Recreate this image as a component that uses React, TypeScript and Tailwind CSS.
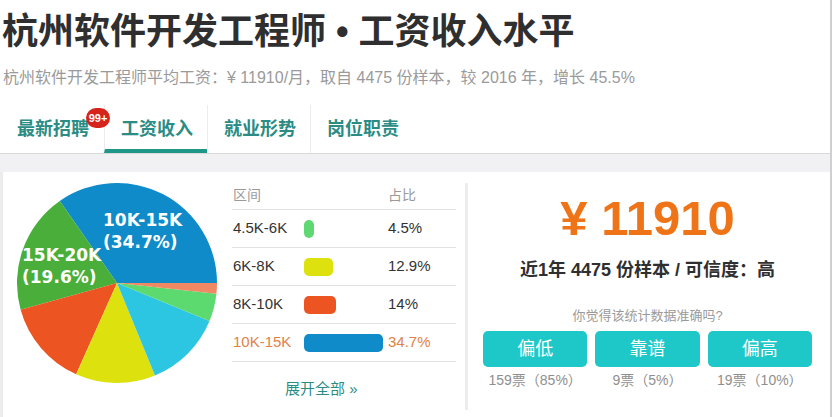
import React from "react";

const slices = [
  { pct: 34.7, color: "#0f8bc9" },
  { pct: 19.6, color: "#4aae3a" },
  { pct: 14, color: "#ec5521" },
  { pct: 12.9, color: "#dde20f" },
  { pct: 12.6, color: "#2cc6e2" },
  { pct: 4.5, color: "#5cda70" },
  { pct: 1.7, color: "#f08864" },
];

const rows = [
  { range: "4.5K-6K", pct: "4.5%", w: 10, color: "#5fd873" },
  { range: "6K-8K", pct: "12.9%", w: 29, color: "#dde20f" },
  { range: "8K-10K", pct: "14%", w: 32, color: "#ec5521" },
  { range: "10K-15K", pct: "34.7%", w: 79, color: "#0f8bc9", hot: true },
];

const votes = [
  { label: "偏低", text: "159票（85%）" },
  { label: "靠谱", text: "9票（5%）" },
  { label: "偏高", text: "19票（10%）" },
];

function Pie() {
  const cx = 100;
  const cy = 100;
  const r = 100;
  let start = 0;
  const pt = (deg: number) => {
    const a = (deg * Math.PI) / 180;
    return [cx + r * Math.cos(a), cy - r * Math.sin(a)];
  };
  return (
    <svg width="201" height="201" viewBox="0 0 201 201">
      {slices.map((s, i) => {
        const end = start + (s.pct / 100) * 360;
        const [x1, y1] = pt(start);
        const [x2, y2] = pt(end);
        const large = end - start > 180 ? 1 : 0;
        start = end;
        return (
          <path
            key={i}
            d={`M${cx} ${cy} L${x1} ${y1} A${r} ${r} 0 ${large} 0 ${x2} ${y2} Z`}
            fill={s.color}
          />
        );
      })}
      <g fill="#fff" fontWeight="bold" fontSize="17" fontFamily="'DejaVu Sans', sans-serif">
        <text x="86" y="43">10K-15K</text>
        <text x="86" y="65">(34.7%)</text>
        <text x="5" y="78">15K-20K</text>
        <text x="5" y="100">(19.6%)</text>
      </g>
    </svg>
  );
}

export default function App() {
  return (
    <div
      className="w-[832px] h-[417px] overflow-hidden bg-white border-r-2 border-[#cfcfcf]"
      style={{ fontFamily: "'Liberation Sans', 'Noto Sans CJK SC', sans-serif" }}
    >
      {/* header */}
      <div className="border-b border-[#d9d9d9]">
        <h1 className="mt-[12px] pl-[2px] text-[36px] leading-[40px] font-bold text-[#2f2f2f] whitespace-nowrap">
          杭州软件开发工程师 • 工资收入水平
        </h1>
        <p className="mt-[14px] pl-[3px] text-[16px] leading-[24px] text-[#9a9a9a] whitespace-nowrap">
          杭州软件开发工程师平均工资：¥ 11910/月，取自 4475 份样本，较 2016 年，增长 45.5%
        </p>
        <div className="mt-[15px] flex h-[48px] pl-[1px]">
          <div className="relative flex items-center w-[103px] pl-[16px] text-[18px] font-bold text-[#2a8c84]">
            最新招聘
            <span className="absolute left-[85px] top-[3px] flex h-[20px] w-[24px] items-center justify-center rounded-full bg-[#d6231b] text-[11px] font-bold text-white">
              99+
            </span>
          </div>
          <div className="flex items-center w-[103px] pl-[16px] text-[18px] font-bold text-[#2a8c84] border-l border-[#ececec] border-b-4 border-b-[#1f968a] pt-[4px]">
            工资收入
          </div>
          <div className="flex items-center w-[103px] pl-[16px] text-[18px] font-bold text-[#2a8c84] border-l border-[#ececec]">
            就业形势
          </div>
          <div className="flex items-center w-[103px] pl-[16px] text-[18px] font-bold text-[#2a8c84] border-l border-[#ececec]">
            岗位职责
          </div>
        </div>
      </div>
      <div className="h-[18px] bg-[#f1f1f3]" />

      {/* content */}
      <div className="flex h-[245px] border-l-[3px] border-[#ececec]">
        <div className="flex w-[462px] shrink-0">
          <div className="pl-[14px] pt-[11px]">
            <Pie />
          </div>
          <div className="ml-[14px] w-[224px] pt-[6px]">
            <div className="flex h-[32px] items-center pt-[4px] border-b border-[#e2e2e2] pl-[1px] text-[14px] text-[#9a9a9a]">
              <span className="w-[155px]">区间</span>
              <span>占比</span>
            </div>
            {rows.map((r) => (
              <div
                key={r.range}
                className={`flex h-[38px] items-center border-b border-[#e2e2e2] pl-[1px] text-[15px] ${
                  r.hot ? "text-[#e0824a]" : "text-[#333]"
                }`}
              >
                <span className="w-[71px]">{r.range}</span>
                <span className="w-[84px]">
                  <span
                    className="block h-[18px] rounded-[5px]"
                    style={{ width: r.w, background: r.color }}
                  />
                </span>
                <span>{r.pct}</span>
              </div>
            ))}
            <div className="mt-[17px] pl-[53px] text-[15px] leading-[20px] text-[#2a8c84]">
              展开全部 »
            </div>
          </div>
        </div>
        <div className="mt-[11px] h-[227px] w-[3px] bg-[#ececec]" />
        <div className="flex flex-1 flex-col items-center pl-[15px] pr-[18px]">
          <div className="mt-[18px] text-[49px] leading-[56px] font-bold text-[#ef7417]">¥ 11910</div>
          <div className="mt-[11px] text-[18px] leading-[26px] font-bold text-[#2f2f2f]">
            近1年 4475 份样本 / 可信度：高
          </div>
          <div className="mt-[23px] text-[13px] leading-[20px] text-[#9a9a9a]">你觉得该统计数据准确吗?</div>
          <div className="mt-[5px] grid w-full grid-cols-3 gap-[8px]">
            {votes.map((v) => (
              <div key={v.label} className="flex flex-col items-center">
                <button className="h-[36px] w-full rounded-[5px] bg-[#1ec8c9] text-[18px] text-white">
                  {v.label}
                </button>
                <span className="mt-[3px] text-[14px] leading-[20px] text-[#8f8f8f]">{v.text}</span>
              </div>
            ))}
          </div>
        </div>
      </div>
    </div>
  );
}
